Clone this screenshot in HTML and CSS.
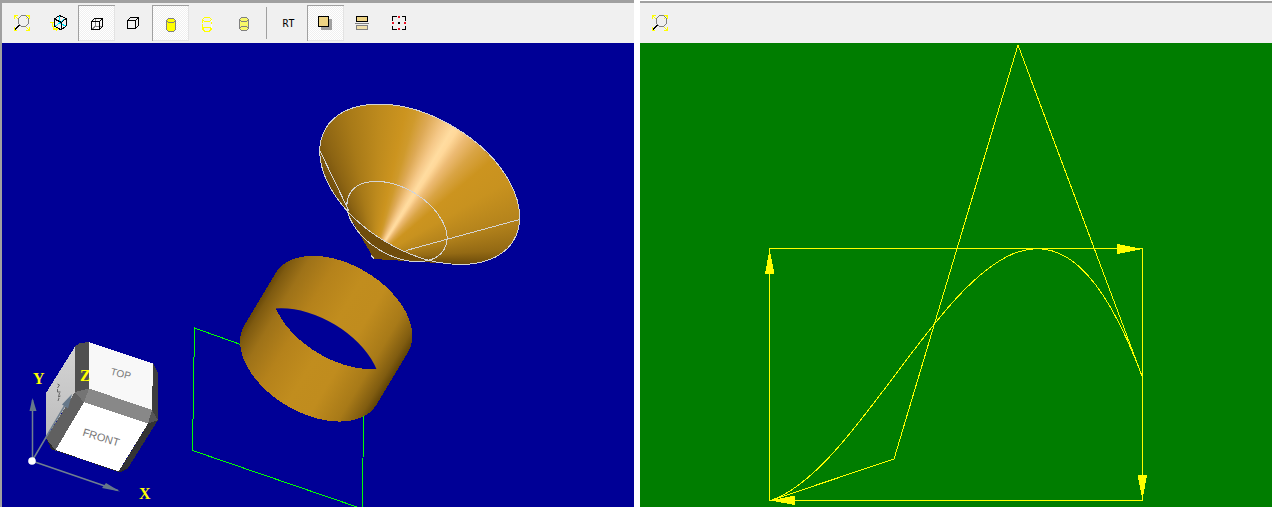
FILE: index.html
```html
<!DOCTYPE html>
<html lang="en">
<head>
<meta charset="utf-8">
<title>3D and 2D viewers</title>
<link rel="stylesheet" href="styles.css">
</head>
<body>
<main class="workspace">
  <section class="viewer viewer-3d" aria-label="3D view">
    <div class="toolbar" role="toolbar" aria-label="3D view tools">
      <button class="tool" type="button" aria-label="Fit all">
        <svg class="icon" viewBox="0 0 37 36"><use href="#fit"/></svg>
      </button>
      <button class="tool" type="button" aria-label="Axonometry">
        <svg class="icon" viewBox="0 0 37 36">
          <path class="yellow-line" d="M9 17.500h4M11.500 17v5M12.500 21v3.500h4M15.500 22v4M13 23.500h4"/>
          <path class="cyan-line" d="M18.500 11v7l-4 3M18.500 18l6 3M20 17l4-3"/>
          <path class="black-line" d="M18.500 10.500l6.500 3v7.500l-5 4-6.500-4v-7zM13.500 14l7 3.500 4.500-4M20.500 17.500v7"/>
        </svg>
      </button>
      <button class="tool pressed" type="button" aria-label="Hidden lines on" aria-pressed="true">
        <svg class="icon" viewBox="0 0 37 36">
          <path class="gray-line" d="M17 13v8.500h8M17 21.500l-3 3"/>
          <path class="black-line" d="M13.500 16.500h8v8h-8zM13.500 16.500l3-3h8v8l-3 3M21.500 16.500l3-3"/>
        </svg>
      </button>
      <button class="tool" type="button" aria-label="Hidden lines off">
        <svg class="icon" viewBox="0 0 37 36">
          <path class="black-line" d="M12.500 15.500h8v8h-8zM12.500 15.500l3-3h8v8l-3 3M20.500 15.500l3-3"/>
        </svg>
      </button>
      <button class="tool pressed" type="button" aria-label="Shading" aria-pressed="true">
        <svg class="icon" viewBox="0 0 37 36">
          <path class="yellow-fill gray-line" d="M14.500 15.500l2-2h5l2 2v9l-2 2h-5l-2-2z"/>
          <path class="gray-line" d="M14.500 16l2 1.500h5l2-1.500"/>
        </svg>
      </button>
      <button class="tool" type="button" aria-label="Wireframe">
        <svg class="icon" viewBox="0 0 37 36">
          <path class="white-line" d="M22.500 14v10l-2 2"/>
          <path class="yellow-line" d="M13.500 14.500l2-2h5l2 2-2 2h-5l-2-2v3M13.500 19v5l2 2h5l2-2-2-2h-5l-2 2M22.500 19v-2"/>
        </svg>
      </button>
      <button class="tool" type="button" aria-label="Transparency">
        <svg class="icon" viewBox="0 0 37 36">
          <path class="gray-line pale-fill" d="M13.500 14.500l2-2h5l2 2v9l-2 2h-5l-2-2z"/>
          <path class="gray-line" d="M13.500 15l2 1.500h5l2-1.500M13.500 23l2-1.500h5l2 1.500"/>
        </svg>
      </button>
      <span class="separator"></span>
      <button class="tool" type="button" aria-label="Ray tracing">RT</button>
      <button class="tool pressed" type="button" aria-label="Shadows" aria-pressed="true">
        <svg class="icon" viewBox="0 0 37 36">
          <path fill="#a0a0a0" d="M14 14h11v11H14z"/>
          <path fill="#eed484" stroke="#000" d="M11.500 11.500h10v10h-10z"/>
        </svg>
      </button>
      <button class="tool" type="button" aria-label="Reflections">
        <svg class="icon" viewBox="0 0 37 36">
          <path fill="#eed484" stroke="#000" d="M12.500 11.500h11v5h-11z"/>
          <path class="gray-line" d="M11 18.500h14"/>
          <path fill="#f0e0ac" stroke="#808080" d="M12.500 20.500h11v4h-11z"/>
        </svg>
      </button>
      <button class="tool" type="button" aria-label="Antialiasing">
        <svg class="icon" viewBox="0 0 37 36">
          <path class="black-line" d="M11.500 15.500v-4h4M20.500 11.500h4v4M24.500 20.500v4h-4M15.500 24.500h-4v-4"/>
          <path fill="#000" d="M17 17h2v2h-2z"/>
          <path fill="#e81123" d="M17 11h2v2h-2zM17 23h2v2h-2zM11 17h2v2h-2zM23 17h2v2h-2z"/>
        </svg>
      </button>
    </div>
    <svg class="scene scene-3d" viewBox="2 43 632 464" role="img" aria-label="Cone and cylinder">
      <defs>
        <linearGradient id="tube">
          <stop offset="0" stop-color="#674809"/>
          <stop offset=".04" stop-color="#7e5a10"/>
          <stop offset=".14" stop-color="#9e7218"/>
          <stop offset=".3" stop-color="#b5821b"/>
          <stop offset=".5" stop-color="#c18d1e"/>
          <stop offset=".66" stop-color="#c08c1e"/>
          <stop offset=".84" stop-color="#a87a18"/>
          <stop offset=".95" stop-color="#805c10"/>
          <stop offset="1" stop-color="#5f4308"/>
        </linearGradient>
        <linearGradient id="side" x1="0" y1="0" x2="0" y2="1">
          <stop offset="0" stop-color="#d4d4d4"/>
          <stop offset="1" stop-color="#bcbcbc"/>
        </linearGradient>
        <clipPath id="rim"><ellipse rx="109.400" ry="66.800" transform="translate(419.700 184.300) rotate(30.800)"/></clipPath>
        <clipPath id="lower"><ellipse cy="30.600" rx="77.100" ry="47.100"/></clipPath>
      </defs>

      <path class="green-line" d="M242 345L194.500 328L192.500 450.500L360 508M363.500 410L362.500 507"/>

      <g transform="translate(326.200 338.700) rotate(31)" shape-rendering="crispEdges">
        <path fill="url(#tube)" d="M-77.100 -30.600A77.100 47.100 0 0 1 77.100 -30.600V30.600A77.100 47.100 0 0 1 -77.100 30.600Z"/>
        <ellipse class="backdrop" cy="-30.600" rx="77.100" ry="47.100" clip-path="url(#lower)"/>
      </g>

      <path fill="#704d0c" shape-rendering="crispEdges" d="M374 259L340 200L400 180L470 240L462 264.500Z"/>
      <g clip-path="url(#rim)">
        <foreignObject x="318" y="102" width="204" height="165"><div class="cone-shade"></div></foreignObject>
      </g>
      <g class="edge-line">
        <ellipse rx="109.400" ry="66.800" transform="translate(419.700 184.300) rotate(30.800)"/>
        <ellipse rx="54.700" ry="33.400" transform="translate(397 221.500) rotate(30.800)"/>
        <path d="M319.500 150L349 211M519.500 219.500L406 250.500M371 255l3 4"/>
      </g>

      <g shape-rendering="crispEdges">
        <path fill="#282828" d="M46 437l5 12 69 23.500 8-4-8-6-60-20z"/>
        <path fill="url(#side)" d="M75 346.500V392L46 438V393z"/>
        <path fill="#505050" d="M75 346.500l5-3.500 9.500-1V388.500L75 392z"/>
        <path fill="#f8f8f8" d="M89 342l64 21.500-1 46.500-63-21.500z"/>
        <path fill="#3e3e3e" d="M153 363.500l5 10v47l-6-10.500z"/>
        <path fill="#606060" d="M75 392l9 10.500L55.500 450.500 46 438.500z"/>
        <path fill="#747474" d="M75 392l14-3.500-5 14z"/>
        <path fill="#888" d="M89 388.500l63 21.500-4 13.500-64-21z"/>
        <path fill="#565656" d="M152 410l6 10-10 3.500z"/>
        <path fill="#fff" d="M84 402l64 21.500-29.500 48-63-21.500z"/>
        <path fill="#343434" d="M148 423.500l10-3.500-30 48-9.500 4z"/>
      </g>
      <path class="side-mark" d="M57.500 384l2 1-2 3M57.500 389v3h3M59.500 393l-1 4 2-1M59 398l-1 3"/>
      <text class="face face-small" transform="translate(120 377) rotate(14)">TOP</text>
      <text class="face" transform="translate(100 441) rotate(17)">FRONT</text>

      <g class="axes">
        <path d="M32.500 461V400M32 461L118 490.500M32 461L68 400"/>
        <path class="arrow" d="M32.500 398l4 13h-7zM120 491.500l-14-8.500-4 5zM72 394l-10 10.500 6 4z"/>
      </g>
      <circle cx="32" cy="461" r="3.800" fill="#fff"/>
      <text class="axis-name" x="33" y="384">Y</text>
      <text class="axis-name" x="80" y="381">Z</text>
      <text class="axis-name" x="139" y="499">X</text>
    </svg>
  </section>

  <section class="viewer viewer-2d" aria-label="2D view">
    <div class="toolbar" role="toolbar" aria-label="2D view tools">
      <button class="tool" type="button" aria-label="Fit all">
        <svg class="icon" viewBox="0 0 37 36">
          <g id="fit">
            <path class="yellow-line" d="M10 10.500h4M10.500 10v4M10 10l4 4M22 10.500h4M25.500 10v4M26 10l-4 4M10 25.500h3M10.500 22v4M22 25.500h4M25.500 22v4M26 26l-4-4"/>
            <circle class="gray-line" cx="19.500" cy="16" r="5.500"/>
            <path class="handle" d="M11 24.500l4.500-4.500"/>
          </g>
        </svg>
      </button>
    </div>
    <svg class="scene scene-2d" viewBox="640 43 632 464" role="img" aria-label="Curve with its control polygon">
      <g class="curve">
        <path d="M769.500 500.500V248.500H1142.500V500.500Z"/>
        <path d="M770.500 500.500L894 459L1018 45L1142 376"/>
        <path d="M770.500 500.500C894 459 1018 45 1142 376"/>
        <path class="head" d="M1117 244l25.500 5-25.500 5zM1137.500 475h9.500l-4.500 25zM770 500.500l25-5v9.500zM769.500 249l5 25h-9.500z"/>
      </g>
    </svg>
  </section>
</main>
</body>
</html>
```
FILE: styles.css
```css
body {
  margin: 0;
  background: #fff;
  font-family: "Liberation Sans", Arial, sans-serif;
}

.workspace {
  display: flex;
  align-items: flex-start;
  gap: 6px;
  padding-right: 7px;
}

.viewer {
  flex: 1 1 0;
  box-sizing: border-box;
  min-width: 0;
}

.viewer-3d {
  border-top: 3px solid #a0a0a0;
  border-left: 2px solid #a0a0a0;
}

.viewer-2d {
  margin-top: 1px;
  border-top: 2px solid #a0a0a0;
}

.toolbar {
  display: flex;
  align-items: center;
  height: 40px;
  padding-left: 2px;
  background: #f0f0f0;
}

.tool {
  flex: none;
  width: 37px;
  height: 36px;
  padding: 0;
  border: 0;
  background: transparent;
  color: #000;
  font: 10px "DejaVu Sans Mono", monospace;
}

.pressed {
  background: repeating-conic-gradient(#fff 0 25%, #f0f0f0 0 50%) 0 0 / 2px 2px;
  box-shadow: inset 1px 1px #a0a0a0, inset -1px -1px #e3e3e3;
}

.separator {
  flex: none;
  width: 1px;
  height: 32px;
  margin: 0 3px;
  background: #a0a0a0;
}

.icon {
  display: block;
  width: 37px;
  height: 36px;
  fill: none;
  shape-rendering: crispEdges;
}

.black-line { stroke: #000; }
.gray-line { stroke: #808080; }
.white-line { stroke: #fff; }
.cyan-line { stroke: #00e5ff; }
.yellow-line { stroke: #ff0; }
.yellow-fill { fill: #ff0; }
.pale-fill { fill: #f8f868; }

.handle {
  stroke: #000;
  stroke-width: 2;
}

.scene {
  display: block;
  width: 100%;
  height: auto;
}

.scene-3d { background: #000096; }
.scene-2d { background: #007d00; }
.backdrop { fill: #000096; }

.green-line {
  fill: none;
  stroke: #0f0;
  shape-rendering: crispEdges;
}

.edge-line {
  fill: none;
  stroke: #d4d4d4;
  shape-rendering: crispEdges;
}

.cone-shade {
  width: 100%;
  height: 100%;
  background: conic-gradient(from -40deg at 56px 157px,
    #5f430a 0deg, #74510d 10deg, #8c6413 18deg, #a87a18 30deg,
    #bd8a1d 42deg, #cc941f 52deg, #cf9a2c 56deg, #dda955 61deg,
    #f5c888 67deg, #ffdca0 71deg, #ffd89a 73deg, #edbb74 77deg,
    #d9a444 83deg, #cc941f 90deg, #c8921f 100deg, #b5841c 114deg,
    #946a14 126deg, #654609 134deg, #654609 360deg);
}

.side-mark {
  fill: none;
  stroke: #666;
}

.face {
  fill: #777;
  font-size: 11px;
  text-anchor: middle;
}

.face-small { font-size: 10px; }

.axes {
  fill: none;
  stroke: #70808f;
  stroke-width: 1.5;
}

.arrow {
  fill: #66788a;
  stroke: none;
}

.axis-name {
  fill: #ff0;
  font: bold 16px "Liberation Serif", "Times New Roman", serif;
}

.curve {
  fill: none;
  stroke: #ff0;
  shape-rendering: crispEdges;
}

.head {
  fill: #ff0;
  stroke: none;
}
```
